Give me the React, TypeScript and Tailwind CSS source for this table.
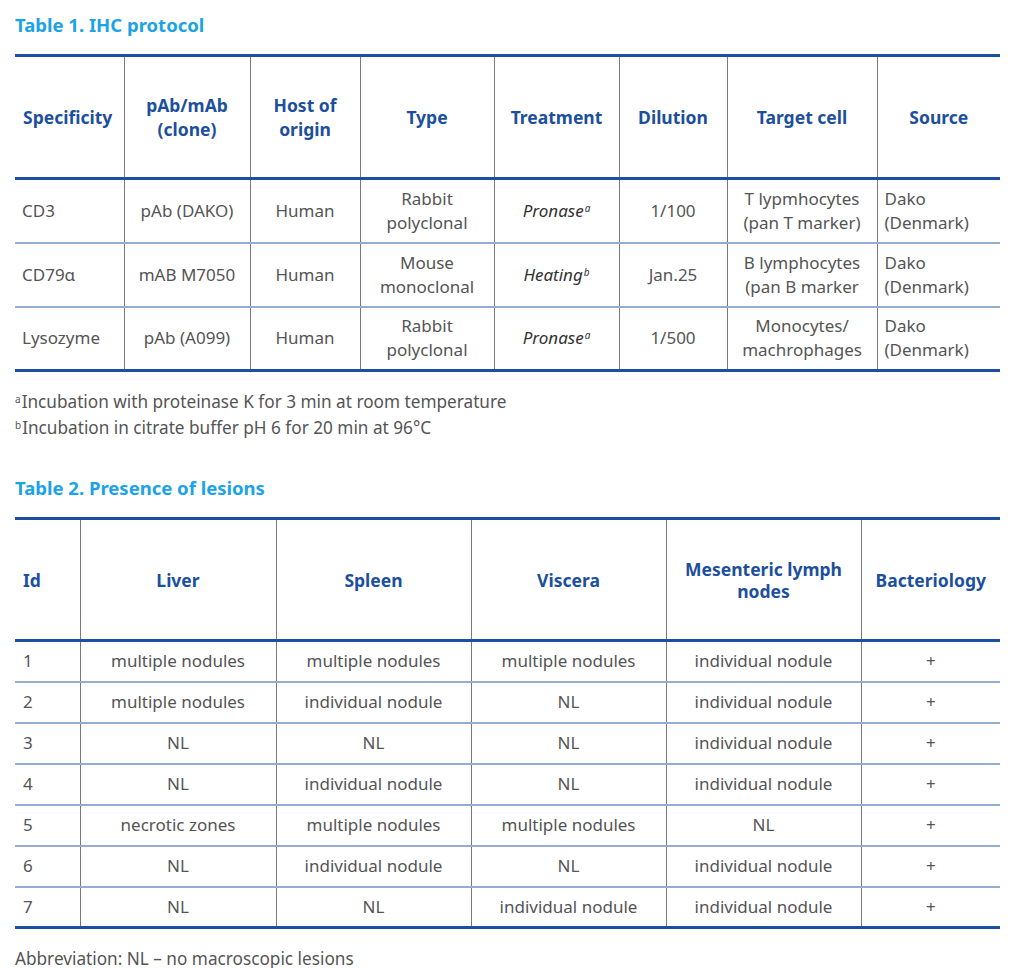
import React from "react";

const F = { fontFamily: '"Noto Sans", "Open Sans", sans-serif' };

function Sup({ c }: { c: string }) {
  return <sup className="text-[10px] ml-[1px]">{c}</sup>;
}

const t1Head = [
  { t: ["Specificity"], left: true },
  { t: ["pAb/mAb", "(clone)"] },
  { t: ["Host of", "origin"] },
  { t: ["Type"] },
  { t: ["Treatment"] },
  { t: ["Dilution"] },
  { t: ["Target cell"] },
  { t: ["Source"] },
];
const t1Widths = [109, 126, 110, 134, 125, 108, 150, 123];

const t1Rows = [
  ["CD3", "pAb (DAKO)", "Human", "Rabbit\npolyclonal", ["Pronase", "a"], "1/100", "T lypmhocytes\n(pan T marker)", "Dako\n(Denmark)"],
  ["CD79α", "mAB M7050", "Human", "Mouse\nmonoclonal", ["Heating", "b"], "Jan.25", "B lymphocytes\n(pan B marker", "Dako\n(Denmark)"],
  ["Lysozyme", "pAb (A099)", "Human", "Rabbit\npolyclonal", ["Pronase", "a"], "1/500", "Monocytes/\nmachrophages", "Dako\n(Denmark)"],
];

const t2Head = ["Id", "Liver", "Spleen", "Viscera", "Mesenteric lymph\nnodes", "Bacteriology"];
const t2Widths = [65, 196, 195, 195, 195, 139];
const t2Rows = [
  ["1", "multiple nodules", "multiple nodules", "multiple nodules", "individual nodule", "+"],
  ["2", "multiple nodules", "individual nodule", "NL", "individual nodule", "+"],
  ["3", "NL", "NL", "NL", "individual nodule", "+"],
  ["4", "NL", "individual nodule", "NL", "individual nodule", "+"],
  ["5", "necrotic zones", "multiple nodules", "multiple nodules", "NL", "+"],
  ["6", "NL", "individual nodule", "NL", "individual nodule", "+"],
  ["7", "NL", "NL", "individual nodule", "individual nodule", "+"],
];

export default function App() {
  return (
    <div className="w-[1024px] h-[968px] bg-white px-[15px] pt-[13px] text-[#555]" style={F}>
      <h2 className="text-[18.5px] font-bold text-[#1ba3e6] leading-[24px]">Table 1. IHC protocol</h2>
      <table className="mt-[17px] w-[985px] table-fixed border-collapse">
        <colgroup>
          {t1Widths.map((w, i) => (
            <col key={i} style={{ width: w }} />
          ))}
        </colgroup>
        <thead>
          <tr className="h-[123px] border-t-[3px] border-b-[3px] border-[#1c4f9f]">
            {t1Head.map((h, i) => (
              <th
                key={i}
                className={`font-bold text-[17.5px] leading-[24px] text-[#1c4f9c] px-2 ${h.left ? "text-left" : "text-center"} ${i > 0 ? "border-l border-[#7a7a7a]" : ""}`}
              >
                {h.t.map((l, j) => (
                  <div key={j}>{l}</div>
                ))}
              </th>
            ))}
          </tr>
        </thead>
        <tbody>
          {t1Rows.map((r, ri) => (
            <tr
              key={ri}
              className={`h-[64px] ${ri < 2 ? "border-b-2 border-[#95acd3]" : "border-b-[3px] border-[#1c4f9f]"}`}
            >
              {r.map((c, ci) => (
                <td
                  key={ci}
                  className={`text-[17px] leading-[24px] px-[7px] ${ci === 0 || ci === 7 ? "text-left" : "text-center"} ${ci > 0 ? "border-l border-[#7a7a7a]" : ""}`}
                >
                  {Array.isArray(c) ? (
                    <span className="italic text-[#333]">
                      {c[0]}
                      <Sup c={c[1]} />
                    </span>
                  ) : (
                    c.split("\n").map((l, j) => <div key={j}>{l}</div>)
                  )}
                </td>
              ))}
            </tr>
          ))}
        </tbody>
      </table>
      <div className="mt-[17px] text-[17.2px] leading-[26px]">
        <div>
          <sup className="text-[10px] mr-[1px]">a</sup>Incubation with proteinase K for 3 min at room temperature
        </div>
        <div>
          <sup className="text-[10px] mr-[1px]">b</sup>Incubation in citrate buffer pH 6 for 20 min at 96°C
        </div>
      </div>
      <h2 className="mt-[35px] text-[18.5px] font-bold text-[#1ba3e6] leading-[24px]">Table 2. Presence of lesions</h2>
      <table className="mt-[17px] w-[985px] table-fixed border-collapse">
        <colgroup>
          {t2Widths.map((w, i) => (
            <col key={i} style={{ width: w }} />
          ))}
        </colgroup>
        <thead>
          <tr className="h-[122px] border-t-[3px] border-b-[3px] border-[#1c4f9f]">
            {t2Head.map((h, i) => (
              <th
                key={i}
                className={`font-bold text-[17.5px] leading-[22px] text-[#1c4f9c] px-2 ${i === 0 ? "text-left" : "text-center"} ${i > 0 ? "border-l border-[#7a7a7a]" : ""}`}
              >
                {h.split("\n").map((l, j) => (
                  <div key={j}>{l}</div>
                ))}
              </th>
            ))}
          </tr>
        </thead>
        <tbody>
          {t2Rows.map((r, ri) => (
            <tr
              key={ri}
              className={`h-[41px] ${ri < 6 ? "border-b-2 border-[#95acd3]" : "border-b-[3px] border-[#1c4f9f]"}`}
            >
              {r.map((c, ci) => (
                <td
                  key={ci}
                  className={`text-[17px] leading-[24px] px-[8px] ${ci === 0 ? "text-left" : "text-center"} ${ci > 0 ? "border-l border-[#7a7a7a]" : ""}`}
                >
                  {c}
                </td>
              ))}
            </tr>
          ))}
        </tbody>
      </table>
      <div className="mt-[18px] text-[17.2px] leading-[24px]">Abbreviation: NL – no macroscopic lesions</div>
    </div>
  );
}
